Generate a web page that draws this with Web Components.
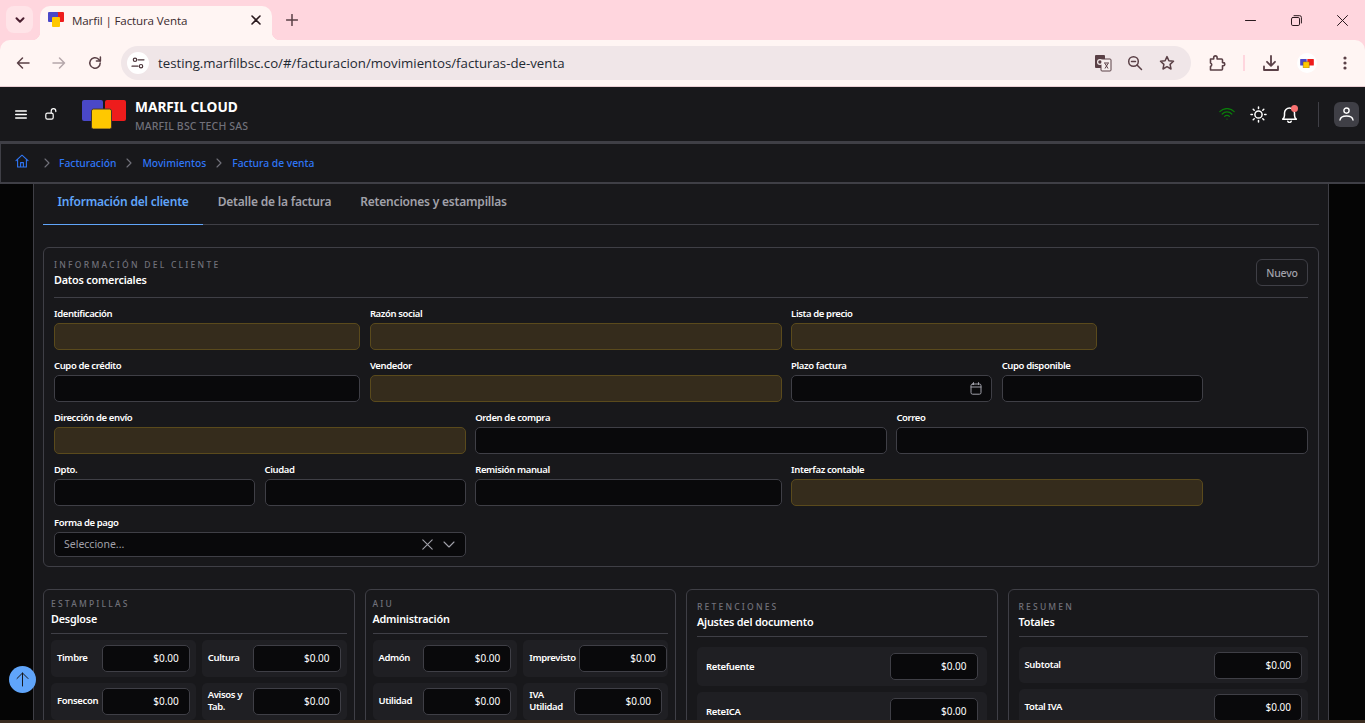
<!DOCTYPE html>
<html lang="es"><head><meta charset="utf-8"><title>Marfil | Factura Venta</title>
<style>
html,body{margin:0;height:100%;overflow:hidden;background:#000;font-family:"Noto Sans","Open Sans",sans-serif}
body{display:flex;flex-direction:column;height:723px;width:1365px;position:relative}
</style></head><body>
<browser-chrome></browser-chrome>
<app-header></app-header>
<app-breadcrumb></app-breadcrumb>
<app-main>
  <tab-bar></tab-bar>
  <info-card eyebrow="INFORMACIÓN DEL CLIENTE" heading="Datos comerciales" pad="10" spacing="2.25" style="margin-top:22px" action="Nuevo">
    <form-grid>
      <form-field label="Identificación" span="3" tone="warn"></form-field>
      <form-field label="Razón social" span="4" tone="warn"></form-field>
      <form-field label="Lista de precio" span="3" tone="warn"></form-field>
      <form-field label="Cupo de crédito" span="3" start="1"></form-field>
      <form-field label="Vendedor" span="4" tone="warn"></form-field>
      <form-field label="Plazo factura" span="2" kind="date"></form-field>
      <form-field label="Cupo disponible" span="2"></form-field>
      <form-field label="Dirección de envío" span="4" tone="warn"></form-field>
      <form-field label="Orden de compra" span="4"></form-field>
      <form-field label="Correo" span="4"></form-field>
      <form-field label="Dpto." span="2"></form-field>
      <form-field label="Ciudad" span="2"></form-field>
      <form-field label="Remisión manual" span="3"></form-field>
      <form-field label="Interfaz contable" span="4" tone="warn"></form-field>
      <form-field label="Forma de pago" span="4" kind="select" value="Seleccione..."></form-field>
    </form-grid>
  </info-card>
  <card-row>
    <info-card eyebrow="ESTAMPILLAS" heading="Desglose" compact>
      <tile-grid>
        <money-tile label="Timbre"></money-tile><money-tile label="Cultura"></money-tile>
        <money-tile label="Fonsecon"></money-tile><money-tile label="Avisos y Tab."></money-tile>
      </tile-grid>
    </info-card>
    <info-card eyebrow="AIU" heading="Administración" compact>
      <tile-grid>
        <money-tile label="Admón"></money-tile><money-tile label="Imprevisto"></money-tile>
        <money-tile label="Utilidad"></money-tile><money-tile label="IVA Utilidad"></money-tile>
      </tile-grid>
    </info-card>
    <info-card eyebrow="RETENCIONES" heading="Ajustes del documento" pad="10">
      <tile-stack>
        <money-tile wide tall label="Retefuente"></money-tile>
        <money-tile wide tall label="ReteICA"></money-tile>
      </tile-stack>
    </info-card>
    <info-card eyebrow="RESUMEN" heading="Totales" pad="10">
      <tile-stack>
        <money-tile wide label="Subtotal"></money-tile>
        <money-tile wide label="Total IVA"></money-tile>
      </tile-stack>
    </info-card>
  </card-row>
</app-main>
<scroll-fab></scroll-fab>
<script>
function def(name, html, init){
  customElements.define(name, class extends HTMLElement{
    constructor(){super();this.attachShadow({mode:'open'});}
    connectedCallback(){
      this.shadowRoot.innerHTML = typeof html==='function'?html(this):html;
      if(init)init(this);
    }
  });
}
const ico=(w,h,vb,body,extra='')=>`<svg width="${w}" height="${h}" viewBox="${vb}" fill="none" stroke="currentColor" stroke-width="1.5" stroke-linecap="round" stroke-linejoin="round" ${extra}>${body}</svg>`;

const logo=(w,h)=>`<svg width="${w}" height="${h}" viewBox="0 0 44 29" fill="none"><rect x="23" y="0" width="21" height="21" rx="2" fill="#ee1c1c"/><rect x="0" y="0" width="21" height="21" rx="2" fill="#4a48c8"/><rect x="9.5" y="9" width="20" height="20" rx="2" fill="#ffc800" stroke="#4a3a2a" stroke-width="1"/></svg>`;
const fav=`<svg width="16" height="15" viewBox="0 0 16 15" style="flex:none;margin-top:-1px"><rect x="7" y="0" width="9" height="10" rx="1" fill="#ee1c1c"/><rect x="0" y="0" width="10" height="10" rx="1" fill="#4a48c8"/><rect x="4" y="5" width="8" height="10" rx="1" fill="#ffc800"/></svg>`;

def('browser-chrome',`<style>
:host{display:block;height:87px;flex:none;background:#ffd6de;color:#4a3338;font-family:"Open Sans","Noto Sans",sans-serif}
.strip{height:40px;display:flex;align-items:flex-end;position:relative}
.list{width:27px;height:27px;border-radius:8px;background:#ffe4e8;margin:0 7px 7px 6px;display:grid;place-items:center;color:#4a1f30}
.tab{width:232px;height:34px;background:#fff5f3;border-radius:10px 10px 0 0;display:flex;align-items:center;padding:0 8px 6px;box-sizing:border-box;position:relative}
.tab::before,.tab::after{content:"";position:absolute;bottom:0;width:8px;height:8px}
.tab::before{left:-8px;background:radial-gradient(circle at 0 0,transparent 8px,#fff5f3 8.5px)}
.tab::after{right:-8px;background:radial-gradient(circle at 100% 0,transparent 8px,#fff5f3 8.5px)}
.tab span{font-size:11.6px;letter-spacing:-.14px;color:#3a2a2e;margin-left:8px;flex:1;white-space:nowrap}
.plus{margin:0 0 14px 14px;color:#5a4046;display:flex}
.win{margin-left:auto;display:flex;align-self:stretch;align-items:center;color:#2a1a1e}
.win i{width:46px;display:grid;place-items:center;font-style:normal}
.bar{height:46px;display:flex;align-items:center;border-bottom:1px solid #e8cdd2;background:#fff5f3;border-radius:10px 10px 0 0}
.nav{width:36px;display:grid;place-items:center;color:#5a4046}
.nav.off{color:#b5a7aa}
.omni{width:1070px;height:34px;border-radius:17px;background:#f0e6e8;margin-left:8px;display:flex;align-items:center;flex:none}
.tune{width:22px;height:22px;border-radius:50%;background:#fff;margin-left:6px;display:grid;place-items:center;color:#4a3338}
.url{margin-left:9px;font-size:13.25px;color:#1f2a33;flex:1;white-space:nowrap}
.omni .a{width:32px;display:grid;place-items:center;color:#5a4046}
.omni .a.last{margin-right:8px}
.tools{display:flex;align-items:center;flex:1;color:#5a4046}
.tools i{display:grid;place-items:center;font-style:normal}
</style>
<div class="strip">
 <div class="list">${ico(12,12,'0 0 12 12','<path d="M2.5 4.2 6 7.8l3.5-3.6"/>','style="stroke-width:2"')}</div>
 <div class="tab">${fav}<span>Marfil | Factura Venta</span>${ico(10,10,'0 0 10 10','<path d="M1 1l8 8M9 1l-8 8"/>','style="color:#2a1a1e;margin-right:3px;stroke-width:1.6"')}</div>
 <div class="plus">${ico(12,12,'0 0 12 12','<path d="M6 .5v11M.5 6h11"/>')}</div>
 <div class="win">
  <i>${ico(11,11,'0 0 11 11','<path d="M.5 5.5h10"/>','style="stroke-width:1"')}</i>
  <i>${ico(11,11,'0 0 11 11','<rect x=".5" y="2.5" width="8" height="8" rx="1.3"/><path d="M3 .7h5.7a1.7 1.7 0 0 1 1.7 1.7V8"/>','style="stroke-width:1"')}</i>
  <i>${ico(11,11,'0 0 11 11','<path d="M.5.5l10 10M10.5.5l-10 10"/>','style="stroke-width:1"')}</i>
 </div>
</div>
<div class="bar">
 <div class="nav" style="margin-left:5px">${ico(16,16,'0 0 16 16','<path d="M14 8H2.5M7.5 3 2.5 8l5 5"/>')}</div>
 <div class="nav off">${ico(16,16,'0 0 16 16','<path d="M2 8h11.5M8.5 3l5 5-5 5"/>')}</div>
 <div class="nav">${ico(16,16,'0 0 16 16','<path d="M13.2 8a5.2 5.2 0 1 1-1.6-3.8L13.2 6"/><path d="M13.4 2v4h-4"/>')}</div>
 <div class="omni">
  <div class="tune">${ico(14,14,'0 0 14 14','<circle cx="4" cy="3.8" r="1.7"/><path d="M7 3.8h6M1 10.2h6"/><circle cx="10" cy="10.2" r="1.7"/>','style="stroke-width:1.2"')}</div>
  <div class="url">testing.marfilbsc.co/#/facturacion/movimientos/facturas-de-venta</div>
  <div class="a"><svg width="18" height="18" viewBox="0 0 18 18"><rect x="1" y="1" width="10" height="13" rx="1" fill="#5a4046"/><rect x="7" y="5" width="10" height="12" rx="1" fill="#f6eeee" stroke="#5a4046" stroke-width="1"/><circle cx="6" cy="8" r="2.4" fill="none" stroke="#f6eeee" stroke-width="1.2"/><path d="M10 9h5M11 9.5l3 5M14 9.5l-3 5" stroke="#5a4046" stroke-width="1" fill="none"/></svg></div>
  <div class="a">${ico(16,16,'0 0 16 16','<circle cx="6.5" cy="6.5" r="4.8"/><path d="M4.5 6.5h4M10 10l4.5 4.5"/>')}</div>
  <div class="a last">${ico(16,16,'0 0 16 16','<path d="M8 1.6l1.9 4.2 4.6.5-3.4 3.1.9 4.6L8 11.7 4 14l.9-4.6L1.5 6.3l4.6-.5z"/>')}</div>
 </div>
 <div class="tools">
  <i style="margin-left:17px">${ico(18,18,'0 0 18 18','<path d="M2.5 5h3.2V3.6a1.7 1.7 0 0 1 3.4 0V5h4.4a1 1 0 0 1 1 1v2.6h.7a1.6 1.6 0 0 1 0 3.2h-.7V15a1 1 0 0 1-1 1H2.5V12.4a1.8 1.8 0 0 0 0-3.4V5z"/>','style="stroke-width:1.6"')}</i>
  <i style="width:2px;height:16px;background:#ffd6de;margin-left:17px"></i>
  <i style="margin-left:17px">${ico(18,18,'0 0 18 18','<path d="M9 2v9.5M5 7.8l4 4 4-4M2 12.5V16h14v-3.5"/>','style="stroke-width:1.8"')}</i>
  <i style="width:20px;height:20px;border-radius:50%;background:#fff;margin-left:17px">${logo(14,9)}</i>
  <i style="margin-left:26px"><svg width="4" height="14" viewBox="0 0 4 14" fill="#5a4046"><circle cx="2" cy="2" r="1.6"/><circle cx="2" cy="7" r="1.6"/><circle cx="2" cy="12" r="1.6"/></svg></i>
 </div>
</div>`);

def('app-header',`<style>
:host{display:flex;align-items:center;height:54px;flex:none;background:#18181b;color:#fff;border-bottom:3px solid #3f3f46}
.left{display:flex;align-items:center;margin-left:15px}
.brand{margin-left:9px;padding-top:3px;line-height:1}
b{display:block;font-size:13.7px;font-weight:700;line-height:18px}
small{display:block;font-size:10.5px;line-height:14px;color:#71717a;margin-top:3px;letter-spacing:.015em;white-space:nowrap;font-weight:500}
.right{margin-left:auto;display:flex;align-items:center}
.bell{position:relative;display:flex;margin-left:-1px}
.bell::after{content:"";position:absolute;right:0;top:-1px;width:7px;height:7px;border-radius:50%;background:#f87171}
.sep{width:1px;height:25px;background:#3f3f46;margin:0 15px 0 20px}
.av{width:25px;height:25px;border-radius:6px;background:#3f3f46;display:grid;place-items:center;margin-right:6px}
</style>
<div class="left">
 ${ico(12,9,'0 0 12 9','<path d="M.7 1h10.6M.7 4.5h10.6M.7 8h10.6"/>')}
 <span style="margin-left:18px;display:flex">${ico(12,12,'0 0 12 12','<rect x=".8" y="5.2" width="7.4" height="6" rx="1.6"/><path d="M6.2 5V3a2.3 2.3 0 0 1 4.6 0v.6"/>','style="stroke-width:1.2"')}</span>
 <span style="margin-left:25px;display:flex">${logo(44,29)}</span>
 <div class="brand"><b>MARFIL CLOUD</b><small>MARFIL BSC TECH SAS</small></div>
</div>
<div class="right">
 ${ico(16,12,'0 0 16 12','<path d="M.8 3.6a10 10 0 0 1 14.4 0M3.2 6a6.6 6.6 0 0 1 9.6 0M5.6 8.4a3.2 3.2 0 0 1 4.8 0"/><path d="M8 11v.1"/>','style="color:#0a7d0a;stroke-width:1.2;margin-right:15px"')}
 ${ico(17,17,'0 0 17 17','<circle cx="8.5" cy="8.5" r="3.6"/><path d="M8.5 1v1.4M8.5 14.6V16M1 8.5h1.4M14.6 8.5H16M3.2 3.2l1 1M12.8 12.8l1 1M3.2 13.8l1-1M12.8 4.2l1-1"/>','style="margin-right:15px"')}
 <span class="bell">${ico(17,17,'0 0 17 17','<path d="M1.7 13.2c1.2-1 1.8-2.2 1.8-4V7a5 5 0 0 1 10 0v2.2c0 1.8.6 3 1.8 4z"/><path d="M6.8 15.2a1.8 1.8 0 0 0 3.4 0"/>')}</span>
 <span class="sep"></span>
 <span class="av">${ico(15,14,'0 0 15 14','<circle cx="7.5" cy="3.6" r="2.6"/><path d="M1 13c.4-2.8 3-4 6.5-4s6.1 1.2 6.5 4"/>','style="stroke-width:1.4"')}</span>
</div>`);

def('app-breadcrumb',`<style>
:host{display:flex;align-items:center;height:37px;padding-bottom:1px;flex:none;background:#18181b;border-bottom:2px solid #3f3f46;border-left:1px solid #3f3f46;color:#2f76f6;font-size:10.3px;font-weight:500}
.home{margin-left:14px;margin-bottom:3px;display:flex}
.c{color:#71717a;margin:0 10px;display:flex}
.home+.c{margin:0 9px 0 15px}
</style>
<span class="home">${ico(14,14,'0 0 14 14','<path d="M1 6.6 7 1.2l6 5.4M2.6 5.4V13h8.8V5.4M5.6 13V8.6h2.8V13"/>','style="stroke-width:1.1"')}</span>
<span class="c">${ico(6,10,'0 0 6 10','<path d="M1 1l4 4-4 4"/>','style="stroke-width:1.1"')}</span><span>Facturación</span>
<span class="c">${ico(6,10,'0 0 6 10','<path d="M1 1l4 4-4 4"/>','style="stroke-width:1.1"')}</span><span>Movimientos</span>
<span class="c">${ico(6,10,'0 0 6 10','<path d="M1 1l4 4-4 4"/>','style="stroke-width:1.1"')}</span><span>Factura de venta</span>`);

def('app-main',`<style>
:host{display:block;flex:1;min-height:0;background:#050505;overflow:hidden;padding:0 36px 0 33px;position:relative}
.panel{height:100%;box-sizing:border-box;background:#18181b;border-left:1px solid #3f3f46;border-right:1px solid #3f3f46;padding:0 9px;overflow:hidden}
.edge{position:absolute;left:0;right:0;bottom:0;height:3px;background:#3a2c20}
</style><div class="panel"><slot></slot></div><div class="edge"></div>`);

def('tab-bar',`<style>
:host{display:flex;border-bottom:1px solid #3f3f46;height:40px;font-size:12px;font-weight:600;letter-spacing:-.2px;color:#a1a1aa}
div{padding:0 14.5px;line-height:35px;white-space:nowrap;margin-bottom:-1px}
.on{color:#60a5fa;border-bottom:1px solid #60a5fa}
</style><div class="on">Información del cliente</div><div>Detalle de la factura</div><div>Retenciones y estampillas</div>`);

def('info-card',h=>{
 const pad=h.getAttribute('pad')||'7';
 const sp=h.getAttribute('spacing')||'2.2';
 const act=h.getAttribute('action');
 const compact=h.hasAttribute('compact');
 return `<style>
:host{display:block;box-sizing:border-box;border:1px solid #3f3f46;border-radius:6px;padding:${compact?9:12}px ${pad}px ${act?9:10}px;background:#18181b}
.head{display:flex;align-items:flex-start;justify-content:space-between;border-bottom:1px solid #3f3f46;height:${compact?35:act?38:35.5}px;margin-bottom:${compact?6:act?8.7:10}px;box-sizing:border-box}
.eb{font-size:8.5px;line-height:10px;letter-spacing:${sp}px;color:#71717a;font-weight:500;white-space:nowrap}
.t{font-size:10.8px;letter-spacing:-.2px;line-height:15px;margin-top:2px;color:#fff;font-weight:600;white-space:nowrap}
button{all:unset;box-sizing:border-box;height:27px;width:52px;margin-top:-1px;border:1px solid #3f3f46;border-radius:6px;text-align:center;font:500 10.5px/24px "Noto Sans",sans-serif;letter-spacing:-.2px;color:#a1a1aa}
</style><div class="head"><div><div class="eb">${h.getAttribute('eyebrow')}</div><div class="t">${h.getAttribute('heading')}</div></div>${act?`<button>${act}</button>`:''}</div><slot></slot>`;
});

def('form-grid',`<style>:host{display:grid;grid-template-columns:repeat(12,1fr);column-gap:9.6px;row-gap:9.25px}</style><slot></slot>`);

def('form-field',h=>{
 const span=h.getAttribute('span')||3, st=h.getAttribute('start');
 const kind=h.getAttribute('kind'), warn=h.getAttribute('tone')==='warn';
 const val=h.getAttribute('value')||'';
 let inner='';
 if(kind==='date') inner=`<span class="end">${ico(12,13,'0 0 12 13','<rect x="1" y="2" width="10" height="10.2" rx="1.6"/><path d="M1 5h10M3.5.6v2M8.5.6v2"/>','style="stroke-width:1;color:#a1a1aa"')}</span>`;
 if(kind==='select') inner=`<span class="val">${val}</span><span class="end sel">${ico(11,11,'0 0 11 11','<path d="M.8.8l9.4 9.4M10.2.8.8 10.2"/>','style="stroke-width:1.1"')}${ico(12,7,'0 0 12 7','<path d="M1 1l5 5 5-5"/>','style="stroke-width:1.1"')}</span>`;
 return `<style>
:host{display:block;grid-column:${st?st+' / ':''}span ${span};min-width:0}
label{display:block;font-size:9.5px;line-height:13px;font-weight:600;letter-spacing:-.38px;color:#fff;margin-bottom:3px;white-space:nowrap}
.box{box-sizing:border-box;height:${kind==='select'?25:27}px;border:1px solid ${warn?'#5a4a1c':'#3f3f46'};border-radius:5px;background:${warn?'#352c1c':'#09090b'};display:flex;align-items:center;padding:0 9px}
.val{font-size:10.5px;color:#a1a1aa;flex:1}
.end{margin-left:auto;display:flex;align-items:center;color:#a1a1aa}
.sel{gap:10px;margin-right:1px;}
</style><label>${h.getAttribute('label')}</label><div class="box">${inner}</div>`;
});

def('card-row',`<style>:host{display:grid;grid-template-columns:repeat(4,1fr);column-gap:10px;margin-top:22px}</style><slot></slot>`);
def('tile-grid',`<style>:host{display:grid;grid-template-columns:minmax(0,1fr) minmax(0,1fr);gap:6px}</style><slot></slot>`);
def('tile-stack',`<style>:host{display:grid;gap:6px}</style><slot></slot>`);

def('money-tile',h=>{
 const wide=h.hasAttribute('wide'), tall=h.hasAttribute('tall');
 return `<style>
:host{display:flex;align-items:center;gap:3px;box-sizing:border-box;background:#1f1f23;border-radius:5px;height:${wide?(tall?39:36):37}px;padding:0 ${tall?9:6}px 0 ${tall?9:6}px;min-width:0}
.l{font-size:9.5px;line-height:12px;color:#fff;font-weight:600;letter-spacing:-.36px;flex:0 1 auto}
.m{flex:none;box-sizing:border-box;width:88px;height:27px;border:1px solid #3f3f46;border-radius:5px;background:#09090b;color:#fff;font-size:10px;line-height:25px;text-align:right;padding-right:10px;margin-left:auto}
</style><span class="l">${h.getAttribute('label')}</span><span class="m">$0.00</span>`;
});

def('scroll-fab',`<style>
:host{position:absolute;left:9px;top:666px;width:27px;height:27px;border-radius:50%;background:#60a5fa;display:grid;place-items:center;color:#18181b}
</style>${ico(13,15,'0 0 13 15','<path d="M6.5 14V1M1 6.5 6.5 1 12 6.5"/>','style="stroke-width:1"')}`);
</script>
</body></html>
